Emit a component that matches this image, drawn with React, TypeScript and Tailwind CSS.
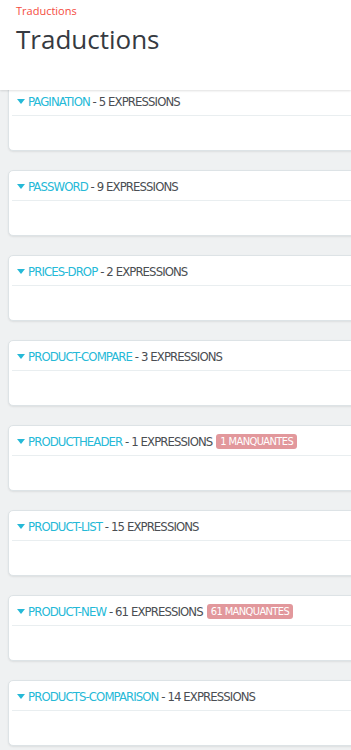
const domains = [
  { name: "PAGINATION", count: 5 },
  { name: "PASSWORD", count: 9 },
  { name: "PRICES-DROP", count: 2 },
  { name: "PRODUCT-COMPARE", count: 3 },
  { name: "PRODUCTHEADER", count: 1, missing: 1 },
  { name: "PRODUCT-LIST", count: 15 },
  { name: "PRODUCT-NEW", count: 61, missing: 61 },
  { name: "PRODUCTS-COMPARISON", count: 14 },
]

const condensed = { fontFamily: '"Liberation Sans Narrow", "DejaVu Sans Condensed", sans-serif' }

function Caret() {
  return (
    <svg width="8" height="5" viewBox="0 0 8 5" className="mr-[3px] shrink-0">
      <path d="M0 0h8L4 5z" fill="#25b9d7" />
    </svg>
  )
}

function DomainCard({ name, count, missing }: { name: string; count: number; missing?: number }) {
  return (
    <div className="mr-[-20px] h-[66px] rounded-[5px] border border-[#dde3e6] bg-white shadow-[0_1px_2px_rgba(0,0,0,0.08)] px-[3px]">
      <div
        className="flex h-[30px] items-center border-b border-[#e9eef0] pl-[5px] pt-[1px] text-[13px] leading-none tracking-[-0.9px]"
        style={condensed}
      >
        <Caret />
        <span className="text-[#25b9d7]">{name}</span>
        <span className="text-[#4a4d52]">&nbsp;- {count} EXPRESSIONS</span>
        {missing ? (
          <span className="ml-[4px] rounded-[3px] bg-[#e2989c] px-[4px] py-[2px] text-[11px] tracking-[-0.6px] text-white">
            {missing} MANQUANTES
          </span>
        ) : null}
      </div>
    </div>
  )
}

export default function App() {
  return (
    <div className="relative h-[750px] overflow-hidden bg-[#eff1f2]">
      <header
        className="absolute inset-x-0 top-0 z-10 h-[90px] bg-white px-4 shadow-[0_1px_2px_rgba(0,0,0,0.12)]"
        style={{ fontFamily: '"Open Sans", sans-serif' }}
      >
        <div className="pt-[2px] text-[11px] leading-[18px] text-[#f54c3e]">Traductions</div>
        <h1 className="mt-[2px] text-[26px] leading-[34px] text-[#363a41]">Traductions</h1>
      </header>
      <div className="flex flex-col gap-[19px] pl-2 pt-[85px]">
        {domains.map((d) => (
          <DomainCard key={d.name} {...d} />
        ))}
      </div>
    </div>
  )
}
